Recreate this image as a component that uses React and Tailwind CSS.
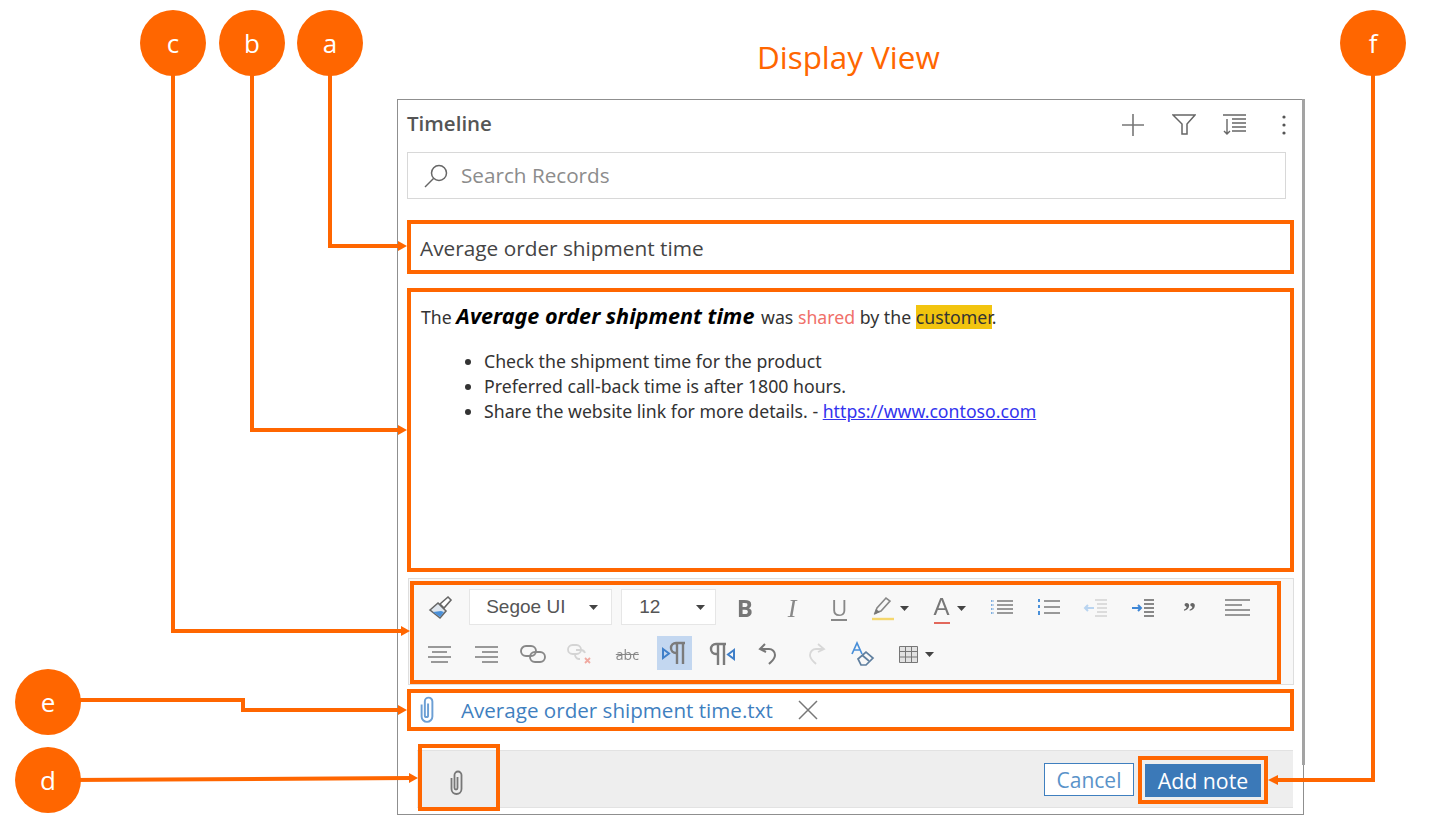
import React from 'react';

const Sans = 'font-["Open_Sans",sans-serif]';

const Bubble = ({ className, label }) => (
  <div className={`absolute w-[66px] h-[66px] rounded-full bg-[#ff6600] flex items-center justify-center text-white text-[26px] font-["Open_Sans",sans-serif] ${className}`}>
    {label}
  </div>
);

const Caret = ({ className = '' }) => (
  <svg width="9" height="5" viewBox="0 0 9 5" className={className}>
    <path d="M0 0h9L4.5 5z" fill="#444" />
  </svg>
);

const Lines = ({ d, color = '#999', w = 24, h = 24, sw = 2, extra }) => (
  <svg width={w} height={h} viewBox={`0 0 ${w} ${h}`} fill="none" stroke={color} strokeWidth={sw}>
    <path d={d} />
    {extra}
  </svg>
);

const Cell = ({ children, className = '' }) => (
  <div className={`w-[47.2px] h-[34px] pt-[2px] shrink-0 flex items-center justify-center ${className}`}>{children}</div>
);

const Clip = ({ color, width, height }) => (
  <svg width={width} height={height} viewBox="0 0 14 26" fill="none" stroke={color} strokeWidth="1.8">
    <path d="M2 8v11a5 5 0 0 0 10 0V5a3.5 3.5 0 0 0-7 0v13a1.5 1.5 0 0 0 3 0V7" />
  </svg>
);

const FontSelect = ({ label, className }) => (
  <div className={`h-[36px] pt-[1px] bg-white border border-[#e6e6e6] flex items-center justify-between text-[19px] text-[#555] font-['Liberation_Sans',sans-serif] ${className}`}>
    <span>{label}</span>
    <Caret />
  </div>
);

const Toolbar = () => (
  <div className="ml-[10px] mt-[6px] w-[886px] h-[107px] bg-[#f8f8f8] border border-[#dedede] shrink-0">
    <div className="ml-[1px] mt-[2px] w-[871px] h-[103px] border-4 border-[#ff6600] flex flex-col pt-[4px] pl-[1px]">
      <div className="flex items-center h-[36px] blur-[0.4px]">
        <Cell className="ml-[2px]">
          <svg width="26" height="26" viewBox="0 0 26 26" fill="none">
            <path d="M2 15l8-7 8 8-6 7z" fill="#dfe6ee" stroke="#666" strokeWidth="1.6" />
            <path d="M5 17l8-1 3 1-4 5z" fill="#4a90d9" />
            <path d="M12 9l8-7 3 3-7 8z" fill="#fff" stroke="#666" strokeWidth="1.6" />
          </svg>
        </Cell>
        <FontSelect label="Segoe UI" className="w-[143px] ml-[5px] pl-[16px] pr-[13px]" />
        <FontSelect label="12" className="w-[95px] ml-[9px] pl-[17px] pr-[10px]" />
        <Cell className="ml-[5px] text-[24px] font-bold text-[#777] font-['Open_Sans',sans-serif]">B</Cell>
        <Cell className="text-[26px] italic text-[#888] font-['Liberation_Serif',serif]">I</Cell>
        <Cell className="text-[22px] text-[#888] font-['Open_Sans',sans-serif]"><span className="border-b-2 border-[#888] leading-[24px]">U</span></Cell>
        <Cell className="ml-[4px] gap-[5px]">
          <svg width="24" height="26" viewBox="0 0 24 26" fill="none">
            <path d="M4 18l2-5L15 3l4 3-9 10z" stroke="#888" strokeWidth="1.6" />
            <path d="M3 20l2-6 4 3z" fill="#777" />
            <path d="M1 24h22" stroke="#f5d76e" strokeWidth="2.4" />
          </svg>
          <Caret />
        </Cell>
        <Cell className="ml-[12px] gap-[7px]">
          <span className="text-[24px] leading-[30px] text-[#777] font-['Liberation_Sans',sans-serif] border-b-2 border-[#e2685c]">A</span>
          <Caret />
        </Cell>
        <Cell className="ml-[4px]">
          <Lines d="M8 5h16M8 9h16M8 13h16M8 17h16" extra={<path d="M2 5h3M2 9h3M2 13h3M2 17h3" stroke="#7eaee0" strokeDasharray="1.5 1" />} />
        </Cell>
        <Cell>
          <Lines d="M8 5h16M8 11h16M8 17h16" extra={<path d="M3 3v3M3 9v3M3 15v4" stroke="#4a90d9" />} />
        </Cell>
        <Cell>
          <Lines color="#dcdcdc" d="M12 4h12M14 8h10M14 12h10M14 16h10M12 20h12" extra={<path d="M11 12H2m3-3l-3 3 3 3" stroke="#b9d4f0" />} />
        </Cell>
        <Cell>
          <Lines color="#888" d="M14 4h10M14 8h10M14 12h10M14 16h10M14 20h10" extra={<path d="M2 12h9m-3-3l3 3-3 3" stroke="#3f87d6" />} />
        </Cell>
        <Cell className="text-[26px] font-bold text-[#666] leading-none pt-[10px] font-['Liberation_Serif',serif]">”</Cell>
        <Cell>
          <Lines w={26} d="M1 4h25M1 9h17M1 14h25M1 19h25" />
        </Cell>
      </div>
      <div className="flex items-center h-[34px] mt-[11px] blur-[0.4px]">
        <Cell>
          <Lines w={26} d="M2 5h23M6 10h15M2 15h23M5 20h17" />
        </Cell>
        <Cell>
          <Lines w={26} d="M2 5h23M9 10h16M2 15h23M9 20h16" />
        </Cell>
        <Cell>
          <svg width="26" height="20" viewBox="0 0 26 20" fill="none" stroke="#888" strokeWidth="1.9">
            <rect x="1" y="2" width="15" height="10" rx="5" />
            <rect x="10" y="8" width="15" height="10" rx="5" />
          </svg>
        </Cell>
        <Cell>
          <svg width="26" height="22" viewBox="0 0 26 22" fill="none" stroke="#d4d4d4" strokeWidth="1.8">
            <rect x="1" y="2" width="13" height="9" rx="4.5" />
            <path d="M9 7h5a4.5 4.5 0 0 1 4 3M13 16h-1a4.5 4.5 0 0 1-4-5" />
            <path d="M18 15l5 5m0-5l-5 5" stroke="#f0a9a0" />
          </svg>
        </Cell>
        <Cell className="text-[14px] text-[#888] font-['Open_Sans',sans-serif] line-through">abc</Cell>
        <div className="w-[35px] h-[34px] mx-[6px] shrink-0 bg-[#c3d7f0] flex items-center justify-center">
          <svg width="26" height="26" viewBox="0 0 26 26" fill="none">
            <path d="M2 9l6 4.500L2 18z" stroke="#3f7fc9" strokeWidth="2" />
            <path d="M16 24V3M22 24V3M24 3H15a5 5 0 0 0 0 10h2" stroke="#7b7b7b" strokeWidth="2.4" />
          </svg>
        </div>
        <Cell>
          <svg width="26" height="26" viewBox="0 0 26 26" fill="none">
            <path d="M9 24V3M15 24V3M17 3H7a5 5 0 0 0 0 10h3" stroke="#7b7b7b" strokeWidth="2.4" />
            <path d="M25 9l-6 4.500 6 4.500z" stroke="#3f7fc9" strokeWidth="2" />
          </svg>
        </Cell>
        <Cell>
          <Lines d="M8 2L3 7l6 3M3 7h9a6 6 0 0 1 6 6c0 4-3 6-6 9" color="#777" />
        </Cell>
        <Cell>
          <Lines d="M14 2l6 5-6 3M20 7h-8a6 6 0 0 0-6 6c0 4 3 6 6 9" sw={1.8} color="#d8d8d8" />
        </Cell>
        <Cell>
          <svg width="26" height="26" viewBox="0 0 26 26" fill="none">
            <path d="M2 13L7 2l5 11M4 9h6" stroke="#4a90d9" strokeWidth="1.7" />
            <path d="M8 18l8-7 7 6-7 7H11z" stroke="#5f7f9f" strokeWidth="1.7" />
            <path d="M12 14l7 6" stroke="#5f7f9f" strokeWidth="1.7" />
          </svg>
        </Cell>
        <Cell className="ml-[6px] gap-[7px]">
          <svg width="19" height="17" viewBox="0 0 19 17" fill="#e2e2e2" stroke="#777" strokeWidth="1">
            <path d="M.5.5h18v16H.5zM.5 5.5h18M.5 11h18M6.5.5v16M12.5.5v16" />
          </svg>
          <Caret />
        </Cell>
      </div>
    </div>
  </div>
);

const Note = () => (
  <div className="w-[887px] ml-[9px] h-[284px] mt-[14px] shrink-0 border-4 border-[#ff6600] pl-[10px] pt-[8px] text-[17.7px] text-[#333] font-['Noto_Sans',sans-serif]">
    <p className="leading-[32px] whitespace-nowrap">
      The <span className="font-bold italic text-[21.6px] text-black pr-[2px]">Average order shipment time</span> was{' '}
      <span className="text-[#f0706a]">shared</span> by the <span className="bg-[#f2c40f]">customer</span>.
    </p>
    <ul className="list-disc pl-[63px] mt-[16px] leading-[25px]">
      <li>Check the shipment time for the product</li>
      <li>Preferred call-back time is after 1800 hours.</li>
      <li>Share the website link for more details. - <a className="text-[#3333ee] underline">https://www.contoso.com</a></li>
    </ul>
  </div>
);

export default function App() {
  return (
    <div className={`relative w-[1452px] h-[826px] bg-white overflow-hidden pt-[99px] ${Sans}`}>
      <div className="absolute left-[757px] top-[35px] text-[31.4px] leading-[44px] text-[#ff6600]">Display View</div>

      <div className="relative ml-[397px] w-[907px] h-[716px] border border-[#8f8f8f] flex flex-col">
        <div className="absolute right-[-2px] top-[-1px] w-[3px] h-[666px] bg-[#a3a3a3]" />

        <div className="h-[52px] shrink-0 flex items-start pl-[9px] pt-[8px] relative">
          <span className="text-[20.5px] leading-[30px] font-semibold text-[#555]">Timeline</span>
          <div className="ml-auto flex items-center mt-[5px] text-[#777]">
            <svg width="24" height="24" viewBox="0 0 24 24" className="mr-[27px]" stroke="#777" strokeWidth="1.6">
              <path d="M12 1v22M1 12h22" />
            </svg>
            <svg width="24" height="22" viewBox="0 0 24 22" fill="none" className="mr-[26px]" stroke="#666" strokeWidth="1.5">
              <path d="M1 1h22l-8 9v10H10V10z" />
            </svg>
            <svg width="24" height="22" viewBox="0 0 24 22" fill="none" className="mr-[36px]" stroke="#666" strokeWidth="1.4">
              <path d="M1 1h23M5 5v15M2 17l3 3 3-3M10 5h14M10 9h14M10 13h14M10 17h14" />
            </svg>
            <svg width="4" height="22" viewBox="0 0 4 22" fill="#555" className="mr-[17px]">
              <circle cx="2" cy="3" r="1.6" />
              <circle cx="2" cy="11" r="1.6" />
              <circle cx="2" cy="19" r="1.6" />
            </svg>
          </div>
        </div>

        <div className="ml-[9px] w-[879px] h-[47px] shrink-0 border-[1.5px] border-[#d8d8d8] flex items-center pl-[15px]">
          <svg width="26" height="26" viewBox="0 0 26 26" fill="none" stroke="#666" strokeWidth="1.5">
            <circle cx="16" cy="10" r="7.5" />
            <path d="M10.5 15.5L2 24" />
          </svg>
          <span className="ml-[12px] text-[20.7px] text-[#8c8c8c]">Search Records</span>
        </div>

        <div className="ml-[9px] mt-[21px] w-[887px] h-[54px] shrink-0 border-4 border-[#ff6600] flex items-center pl-[9px] pt-[4px] text-[20.8px] text-[#444]">
          Average order shipment time
        </div>

        <Note />
        <Toolbar />

        <div className="ml-[9px] mt-[4px] w-[887px] h-[42px] shrink-0 border-4 border-[#ff6600] flex items-center pl-[8px]">
          <Clip color="#6c9fd4" width={16} height={28} />
          <span className="ml-[26px] text-[20.6px] text-[#3f7fbf]">Average order shipment time.txt</span>
          <svg width="20" height="20" viewBox="0 0 20 20" className="ml-[25px]" stroke="#777" strokeWidth="1.5">
            <path d="M1 1l18 18M19 1L1 19" />
          </svg>
        </div>

        <div className="relative ml-[19px] mt-[19px] w-[876px] h-[58px] shrink-0 bg-[#eeeeee] border-y border-[#e2e2e2] flex items-center justify-end pr-[25px]">
          <div className="absolute left-[1px] top-[-7px] w-[82px] h-[67px] border-4 border-[#ff6600] flex items-center justify-center pt-[10px] pr-[5px]">
            <Clip color="#777" width={15} height={26} />
          </div>
          <button className="w-[90px] h-[33px] pt-[3px] bg-white border border-[#3f7fbf] text-[21px] leading-none text-[#5a93c9]">Cancel</button>
          <div className="ml-[4px] mt-[2px] w-[130px] h-[48px] border-4 border-[#ff6600] flex items-center justify-center">
            <div className="w-[116px] h-[33px] pt-[2px] bg-[#3b79b8] text-white text-[21.3px] flex items-center justify-center">Add note</div>
          </div>
        </div>
      </div>

      <Bubble className="left-[140px] top-[10px]" label="c" />
      <Bubble className="left-[219px] top-[10px]" label="b" />
      <Bubble className="left-[297px] top-[10px]" label="a" />
      <Bubble className="left-[1340px] top-[10px]" label="f" />
      <Bubble className="left-[15px] top-[669px]" label="e" />
      <Bubble className="left-[15px] top-[747px]" label="d" />

      <svg width="1452" height="826" className="absolute left-0 top-0 pointer-events-none" fill="none" stroke="#ff6600" strokeWidth="4">
        <path d="M330 70V246H400" />
        <path d="M252 70V430H400" />
        <path d="M173 70V631H402" />
        <path d="M70 700H243V710H400" />
        <path d="M70 780L411 778" />
        <path d="M1373 70V780H1278" />
        <g fill="#ff6600" stroke="none">
          <path d="M407 246l-9-5v10z" />
          <path d="M407 430l-9-5v10z" />
          <path d="M410 631l-9-5v10z" />
          <path d="M407 710l-9-5v10z" />
          <path d="M418 778l-9-5v10z" />
          <path d="M1268 780l10-5v10z" />
        </g>
      </svg>
    </div>
  );
}
